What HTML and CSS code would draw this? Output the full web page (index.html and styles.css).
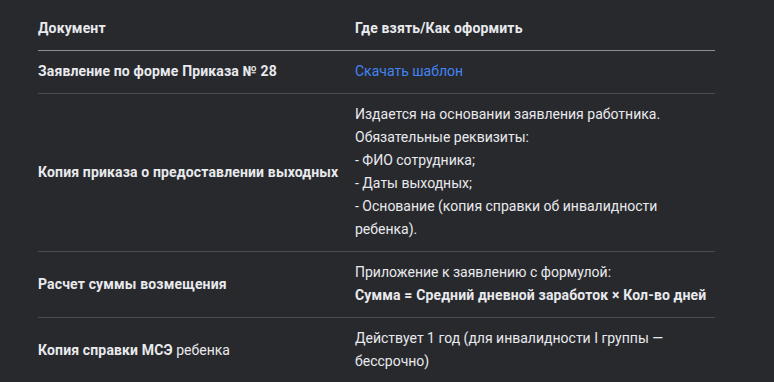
FILE: index.html
```html
<!DOCTYPE html>
<html lang="ru">
<head>
<meta charset="utf-8">
<link rel="stylesheet" href="styles.css">
</head>
<body>
<div class="wrap">
<table class="docs">
  <thead>
    <tr>
      <th class="c1">Документ</th>
      <th class="c2">Где взять/Как оформить</th>
    </tr>
  </thead>
  <tbody>
    <tr>
      <td class="c1"><strong>Заявление по форме Приказа № 28</strong></td>
      <td class="c2"><a class="link" href="#">Скачать шаблон</a></td>
    </tr>
    <tr>
      <td class="c1"><strong>Копия приказа о предоставлении выходных</strong></td>
      <td class="c2">Издается на основании заявления работника.<br>Обязательные реквизиты:<br>- ФИО сотрудника;<br>- Даты выходных;<br>- Основание (копия справки об инвалидности ребенка).</td>
    </tr>
    <tr>
      <td class="c1"><strong>Расчет суммы возмещения</strong></td>
      <td class="c2">Приложение к заявлению с формулой:<br><strong>Сумма = Средний дневной заработок × Кол-во дней</strong></td>
    </tr>
    <tr>
      <td class="c1"><strong>Копия справки МСЭ</strong> ребенка</td>
      <td class="c2">Действует 1 год (для инвалидности I группы — бессрочно)</td>
    </tr>
  </tbody>
</table>
</div>
</body>
</html>
```

FILE: styles.css
```css
html, body {
  margin: 0;
  padding: 0;
  background: #28292d;
}
body {
  font-family: Roboto, "Noto Sans", "Liberation Sans", sans-serif;
  font-size: 14px;
  line-height: 23px;
  color: #e8eaed;
}
.wrap {
  padding: 8px 0 0 38px;
}
.docs {
  width: 677px;
  border-collapse: collapse;
  table-layout: fixed;
}
.docs th, .docs td {
  padding: 9px 0 10px 0;
  text-align: left;
  vertical-align: middle;
}
.docs th {
  font-weight: 700;
  letter-spacing: 0.15px;
  border-bottom: 1px solid #8f9094;
}
.docs tbody tr + tr td {
  border-top: 1px solid #4b4c50;
}
.docs .c1 {
  width: 317px;
}
.docs td.c2 {
  vertical-align: top;
}
strong {
  font-weight: 700;
  letter-spacing: 0.15px;
}
.link {
  color: #4285f4;
  text-decoration: none;
}
```
